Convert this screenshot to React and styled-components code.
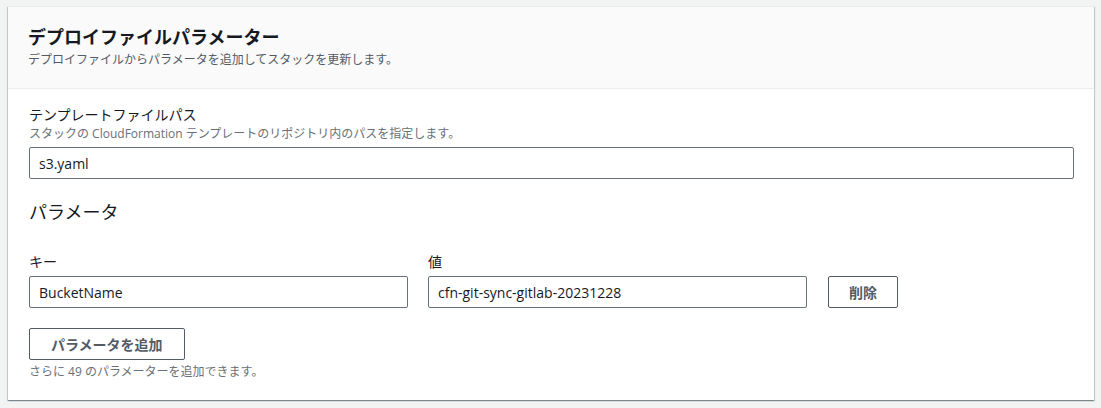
import React from "react";
import styled, { createGlobalStyle } from "styled-components";

const Global = createGlobalStyle`
  html, body { margin: 0; padding: 0; background: #f2f3f3; }
  body {
    font-family: "Open Sans", "Noto Sans CJK JP", sans-serif;
    color: #16191f;
    -webkit-font-smoothing: antialiased;
  }
  * { box-sizing: border-box; }
`;

const Page = styled.div`
  padding: 6px 7px 7px 8px;
`;

const Card = styled.section`
  background: #fff;
  border-top: 1px solid #eaeded;
  box-shadow: 0 1px 1px 0 rgba(0, 28, 36, 0.3), 1px 1px 1px 0 rgba(0, 28, 36, 0.15),
    -1px 1px 1px 0 rgba(0, 28, 36, 0.15);
`;

const Header = styled.header`
  background: #fafafa;
  border-bottom: 1px solid #eaeded;
  padding: 19px 20px 0 20px;
  height: 82px;
`;

const Title = styled.h2`
  margin: 0;
  font-size: 18px;
  line-height: 22px;
  font-weight: 700;
  color: #16191f;
`;

const Subtitle = styled.p`
  margin: 4px 0 0;
  font-size: 12px;
  line-height: 16px;
  color: #545b64;
`;

const Body = styled.div`
  padding: 15px 20px 20px 21px;
`;

const Label = styled.div`
  font-size: 14px;
  line-height: 22px;
  color: #16191f;
`;

const Description = styled.div`
  font-size: 12px;
  line-height: 16px;
  color: #687078;
  margin-bottom: 5px;
`;

const Input = styled.input`
  display: block;
  width: 100%;
  height: 32px;
  border: 1px solid #687078;
  border-radius: 2px;
  padding: 0 9px;
  font-family: "Open Sans", "Noto Sans CJK JP", sans-serif;
  font-size: 14px;
  color: #16191f;
  background: #fff;
  outline: none;
`;

const SectionTitle = styled.h3`
  margin: 20px 0 0;
  font-size: 18px;
  line-height: 26px;
  font-weight: 400;
  color: #16191f;
`;

const ParamRow = styled.div`
  display: flex;
  align-items: flex-end;
  gap: 20px;
  margin-top: 26px;
`;

const Field = styled.div`
  display: flex;
  flex-direction: column;
  width: 379px;
  gap: 3px;
`;

const Button = styled.button`
  height: 32px;
  padding: 0 ${(p) => p.$px || "20px"};
  border: 1px solid #545b64;
  border-radius: 2px;
  background: #fff;
  color: #545b64;
  font-family: "Open Sans", "Noto Sans CJK JP", sans-serif;
  font-size: 14px;
  font-weight: 700;
  cursor: pointer;
  margin-left: ${(p) => p.$ml || "0"};
`;

const AddArea = styled.div`
  margin-top: 20px;
`;

const Hint = styled.div`
  margin-top: 4px;
  font-size: 12px;
  line-height: 16px;
  color: #687078;
`;

export default function App() {
  return (
    <>
      <Global />
      <Page>
        <Card>
          <Header>
            <Title>デプロイファイルパラメーター</Title>
            <Subtitle>デプロイファイルからパラメータを追加してスタックを更新します。</Subtitle>
          </Header>
          <Body>
            <Label>テンプレートファイルパス</Label>
            <Description>スタックの CloudFormation テンプレートのリポジトリ内のパスを指定します。</Description>
            <Input defaultValue="s3.yaml" />
            <SectionTitle>パラメータ</SectionTitle>
            <ParamRow>
              <Field>
                <Label>キー</Label>
                <Input defaultValue="BucketName" />
              </Field>
              <Field>
                <Label>値</Label>
                <Input defaultValue="cfn-git-sync-gitlab-20231228" />
              </Field>
              <Button $px="20px" $ml="1px">削除</Button>
            </ParamRow>
            <AddArea>
              <Button $px="21px">パラメータを追加</Button>
              <Hint>さらに 49 のパラメーターを追加できます。</Hint>
            </AddArea>
          </Body>
        </Card>
      </Page>
    </>
  );
}
